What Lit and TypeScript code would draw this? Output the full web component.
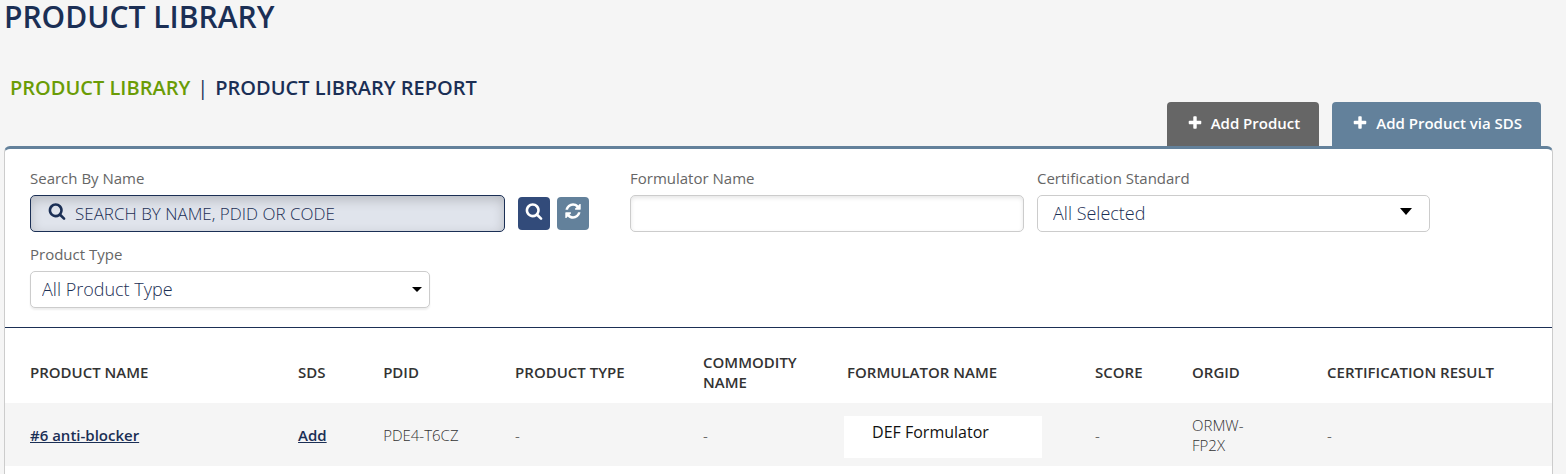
import { LitElement, html, css, svg } from "lit";
import { customElement, property } from "lit/decorators.js";

interface Product {
  name: string;
  sds: string;
  pdid: string;
  type: string;
  commodity: string;
  formulator: string;
  score: string;
  orgId: string;
  result: string;
}

const searchShape = svg`<path fill-rule="evenodd" d="M1216 832q0-185-131.500-316.500t-316.500-131.500-316.500 131.500-131.500 316.500 131.500 316.500 316.500 131.500 316.500-131.500 131.500-316.500zm512 832q0 52-38 90t-90 38q-54 0-90-38l-343-342q-179 124-399 124-143 0-273.500-55.500t-225-150-150-225-55.500-273.500 55.500-273.500 150-225 225-150 273.500-55.500 273.500 55.500 225 150 150 225 55.500 273.500q0 220-124 399l343 343q37 37 37 90z"/>`;
const refreshShape = svg`<path d="M1639 1056q0 5-1 7-64 268-268 434.500t-478 166.500q-146 0-282.500-55t-243.500-157l-129 129q-19 19-45 19t-45-19-19-45v-448q0-26 19-45t45-19h448q26 0 45 19t19 45-19 45l-137 137q71 66 161 102t187 36q134 0 250-65t186-179q11-17 53-117 8-23 30-23h192q13 0 22.500 9.500t9.500 22.500zm25-800v448q0 26-19 45t-45 19h-448q-26 0-45-19t-19-45 19-45l138-138q-148-137-349-137-134 0-250 65t-186 179q-11 17-53 117-8 23-30 23h-199q-13 0-22.500-9.500t-9.500-22.500v-7q65-268 270-434.500t480-166.500q146 0 284 55.500t245 156.500l130-129q19-19 45-19t45 19 19 45z"/>`;
const plusShape = svg`<path d="M1600 736v192q0 40-28 68t-68 28h-416v416q0 40-28 68t-68 28h-192q-40 0-68-28t-28-68v-416h-416q-40 0-68-28t-28-68v-192q0-40 28-68t68-28h416v-416q0-40 28-68t68-28h192q40 0 68 28t28 68v416h416q40 0 68 28t28 68z"/>`;

const icon = (shape: unknown, size: number) =>
  html`<svg class="icon" width=${size} height=${size} viewBox="0 0 1792 1792" aria-hidden="true">${shape}</svg>`;

@customElement("product-table")
export class ProductTable extends LitElement {
  @property({ attribute: false }) products: Product[] = [];

  static styles = css`
    :host {
      display: block;
    }
    .table {
      width: 100%;
      table-layout: fixed;
      border-collapse: collapse;
      font-size: 15px;
      line-height: 20px;
      color: #333;
    }
    .head,
    .cell {
      padding: 0 48px 0 3px;
      text-align: left;
      vertical-align: middle;
    }
    .head {
      height: 75px;
      padding-top: 12px;
      box-sizing: border-box;
      font-weight: 600;
    }
    .cell {
      height: 63px;
      box-sizing: border-box;
      font-weight: 300;
    }
    .head:first-child,
    .cell:first-child {
      padding-left: 25px;
    }
    .cell.boxed {
      padding-left: 0;
      padding-right: 50px;
    }
    .row:nth-child(odd) {
      background: #f5f5f5;
    }
    .link {
      color: #1b2f55;
      font-weight: 600;
      text-decoration: underline;
    }
    .label-box {
      background: #fff;
      color: #111;
      font-size: 16px;
      font-weight: 400;
      padding: 6px 28px 16px;
      margin-top: 4px;
      white-space: nowrap;
    }
    .name {
      width: 18.75%;
    }
    .sds {
      width: 5.5%;
    }
    .pdid {
      width: 8.53%;
    }
    .type {
      width: 12.15%;
    }
    .commodity {
      width: 9.31%;
    }
    .formulator {
      width: 16.03%;
    }
    .score {
      width: 6.27%;
    }
    .org {
      width: 8.73%;
    }
  `;

  render() {
    return html`
      <table class="table">
        <colgroup>
          <col class="name" /><col class="sds" /><col class="pdid" /><col class="type" />
          <col class="commodity" /><col class="formulator" /><col class="score" /><col class="org" /><col />
        </colgroup>
        <thead>
          <tr>
            ${["PRODUCT NAME", "SDS", "PDID", "PRODUCT TYPE", "COMMODITY NAME", "FORMULATOR NAME", "SCORE", "ORGID", "CERTIFICATION RESULT"].map(
              (title) => html`<th class="head" scope="col">${title}</th>`
            )}
          </tr>
        </thead>
        <tbody>
          ${this.products.map(
            (p) => html`<tr class="row">
              <td class="cell"><a class="link" href="#">${p.name}</a></td>
              <td class="cell"><a class="link" href="#">${p.sds}</a></td>
              <td class="cell">${p.pdid}</td>
              <td class="cell">${p.type}</td>
              <td class="cell">${p.commodity}</td>
              <td class="cell boxed"><div class="label-box">${p.formulator}</div></td>
              <td class="cell">${p.score}</td>
              <td class="cell">${p.orgId}</td>
              <td class="cell">${p.result}</td>
            </tr>`
          )}
        </tbody>
      </table>
    `;
  }
}

@customElement("app-root")
export class AppRoot extends LitElement {
  static styles = css`
    :host {
      box-sizing: border-box;
      min-height: 100vh;
      background: #f5f5f5;
      font-family: "Open Sans", sans-serif;
      color: #1b2f55;
      padding: 0 13px 0 4px;
      display: flex;
      flex-direction: column;
    }
    .title {
      margin: 0;
      font-size: 30px;
      line-height: 34px;
      font-weight: 600;
    }
    .tabs {
      display: flex;
      gap: 7px;
      margin-top: 40px;
      padding-left: 6px;
      font-size: 20px;
      line-height: 28px;
      font-weight: 600;
    }
    .tab {
      color: inherit;
      text-decoration: none;
    }
    .tab.active {
      color: #6a9c06;
    }
    .divider {
      font-weight: 400;
    }
    .actions {
      display: flex;
      justify-content: flex-end;
      gap: 13px;
      padding-right: 12px;
    }
    .action {
      display: flex;
      align-items: center;
      gap: 8px;
      height: 44px;
      padding: 0 19px 2px 20px;
      border: 0;
      border-radius: 4px 4px 0 0;
      background: #666;
      color: #fff;
      font: 600 15px/20px "Open Sans", sans-serif;
    }
    .action.blue {
      background: #63819b;
    }
    .icon {
      display: block;
      flex: none;
      fill: currentColor;
    }
    .panel {
      flex: 1;
      background: #fff;
      border: 1px solid #ccc;
      border-top: 3px solid #63819b;
      border-bottom: 0;
      border-radius: 6px 6px 0 0;
    }
    .filters {
      display: grid;
      grid-template-columns: 587fr 394fr 393fr;
      gap: 12px 13px;
      padding: 19px 122px 19px 25px;
      border-bottom: 1px solid #1b2f55;
    }
    .label {
      display: block;
      margin-bottom: 7px;
      font-size: 15px;
      line-height: 20px;
      color: #666;
    }
    .field-row {
      display: flex;
      align-items: center;
      padding-right: 28px;
    }
    .control {
      position: relative;
      flex: 1;
    }
    .narrow {
      max-width: 400px;
    }
    .box {
      display: block;
      width: 100%;
      height: 37px;
      box-sizing: border-box;
      margin: 0;
      padding: 0 11px 2px;
      appearance: none;
      border: 1px solid #ccc;
      border-radius: 5px;
      background: #fff;
      color: #1b2f55;
      font: 300 18px/24px "Open Sans", sans-serif;
      outline: 0;
    }
    .text {
      box-shadow: inset 0 2px 4px rgba(0, 0, 0, 0.1);
    }
    .raised {
      box-shadow: 0 2px 2px rgba(0, 0, 0, 0.07);
    }
    .inset {
      padding-left: 15px;
    }
    .search {
      padding: 0 11px 0 44px;
      border-color: #1b2f55;
      background: #e0e4ec;
      box-shadow: inset 0 4px 12px rgba(0, 0, 0, 0.18);
      font-size: 17px;
    }
    .search::placeholder {
      color: #1b2f55;
      opacity: 1;
    }
    .search-icon {
      position: absolute;
      left: 18px;
      top: 7px;
    }
    .caret {
      position: absolute;
      right: 8px;
      top: 16px;
      fill: #000;
      pointer-events: none;
    }
    .caret.large {
      right: 18px;
      top: 13px;
    }
    .square {
      display: flex;
      justify-content: center;
      width: 32px;
      height: 33px;
      margin-left: 7px;
      padding: 5px 0 0;
      border: 0;
      border-radius: 4px;
      background: #63819b;
      color: #fff;
    }
    .square.dark {
      margin-left: 13px;
      background: #324b7a;
    }
  `;

  private products: Product[] = [
    {
      name: "#6 anti-blocker",
      sds: "Add",
      pdid: "PDE4-T6CZ",
      type: "-",
      commodity: "-",
      formulator: "DEF Formulator",
      score: "-",
      orgId: "ORMW-FP2X",
      result: "-",
    },
  ];

  render() {
    return html`
      <h1 class="title">PRODUCT LIBRARY</h1>
      <nav class="tabs">
        <a class="tab active" href="#">PRODUCT LIBRARY</a>
        <span class="divider">|</span>
        <a class="tab" href="#">PRODUCT LIBRARY REPORT</a>
      </nav>
      <div class="actions">
        <button class="action" type="button">${icon(plusShape, 16)}Add Product</button>
        <button class="action blue" type="button">${icon(plusShape, 16)}Add Product via SDS</button>
      </div>
      <main class="panel">
        <form class="filters">
          <div>
            <label class="label" for="search">Search By Name</label>
            <div class="field-row">
              <div class="control">
                <input class="box search" id="search" type="text" placeholder="SEARCH BY NAME, PDID OR CODE" />
                <span class="search-icon">${icon(searchShape, 18)}</span>
              </div>
              <button class="square dark" type="button" aria-label="Search">${icon(searchShape, 18)}</button>
              <button class="square" type="button" aria-label="Reset">${icon(refreshShape, 18)}</button>
            </div>
          </div>
          <div>
            <label class="label" for="formulator">Formulator Name</label>
            <input class="box text" id="formulator" type="text" />
          </div>
          <div>
            <label class="label" for="standard">Certification Standard</label>
            <div class="control">
              <select class="box inset" id="standard">
                <option>All Selected</option>
              </select>
              <svg class="caret large" width="12" height="7" viewBox="0 0 12 7" aria-hidden="true"><path d="M0 0h12L6 7z" /></svg>
            </div>
          </div>
          <div>
            <label class="label" for="type">Product Type</label>
            <div class="control narrow">
              <select class="box raised" id="type">
                <option>All Product Type</option>
              </select>
              <svg class="caret" width="10" height="5" viewBox="0 0 10 5" aria-hidden="true"><path d="M0 0h10L5 5z" /></svg>
            </div>
          </div>
        </form>
        <product-table .products=${this.products}></product-table>
      </main>
    `;
  }
}
